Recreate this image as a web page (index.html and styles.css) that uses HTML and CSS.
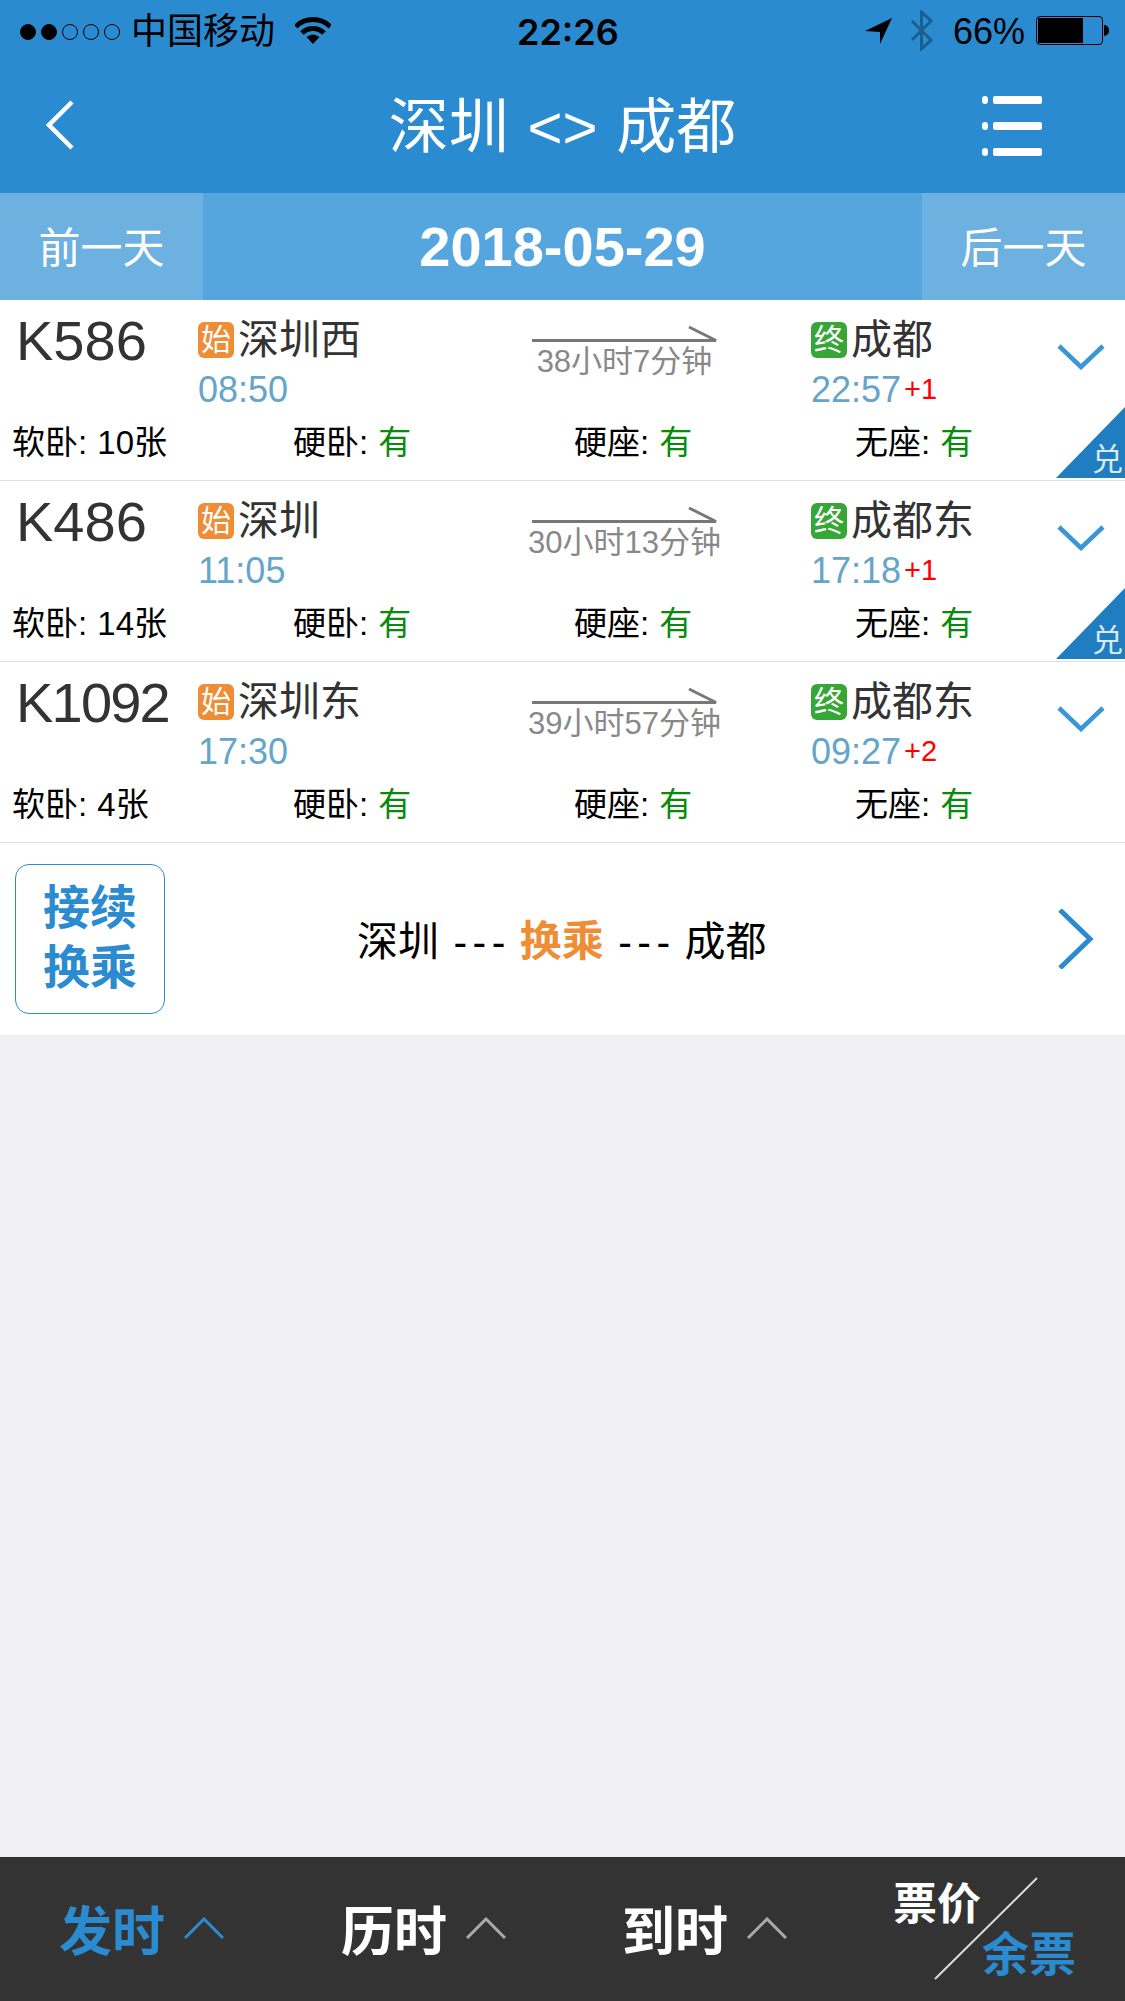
FILE: index.html
```html
<!DOCTYPE html>
<html lang="zh">
<head>
<meta charset="utf-8">
<title>深圳 - 成都</title>
<link rel="stylesheet" href="styles.css">
</head>
<body>
<header class="head">
  <div class="status">
    <div class="signal"><i class="dot on"></i><i class="dot on"></i><i class="dot"></i><i class="dot"></i><i class="dot"></i></div>
    <span class="carrier">中国移动</span>
    <svg class="wifi" viewBox="0 0 36 27"><path d="M.7 9.7a24.5 24.5 0 0 1 34.6 0M7 16a15.5 15.5 0 0 1 22 0" fill="none" stroke="#000" stroke-width="5"/><path d="M18 27 11.5 20Q18 15 24.500 20Z"/></svg>
    <span class="clock">22:26</span>
    <svg class="loc" viewBox="0 0 27 26"><path d="M27 0 0 13 15 14 15 26Z"/></svg>
    <svg class="bt" viewBox="0 0 23 41"><path d="M2 11 21 30 11.500 39V2L21 11 2 30" fill="none" stroke="#1c5e8e" stroke-width="3"/></svg>
    <span class="pct">66%</span>
    <div class="battery"><div class="level"></div></div>
  </div>
  <nav class="nav">
    <div class="nav-left"><svg class="back" viewBox="0 0 28 50"><path d="M26 2 3 25 26 48" fill="none" stroke="#fff" stroke-width="4.500"/></svg></div>
    <h1 class="title">深圳 &lt;&gt; 成都</h1>
    <div class="nav-right">
      <svg class="menu" viewBox="0 0 60 60"><g fill="#fff"><rect x="0" y="0" width="6" height="8" rx="3"/><rect x="11" y="0" width="49" height="8" rx="2"/><rect x="0" y="26" width="6" height="8" rx="3"/><rect x="11" y="26" width="49" height="8" rx="2"/><rect x="0" y="52" width="6" height="8" rx="3"/><rect x="11" y="52" width="49" height="8" rx="2"/></g></svg>
    </div>
  </nav>
  <div class="datebar">
    <div class="day">前一天</div>
    <div class="date">2018-05-29</div>
    <div class="day">后一天</div>
  </div>
</header>

<main class="main">
  <article class="row">
    <div class="top">
      <div class="train">K586</div>
      <div class="stop">
        <div class="name"><span class="tag start">始</span>深圳西</div>
        <div class="time">08:50</div>
      </div>
      <div class="trip">
        <svg class="arrow" viewBox="0 0 185 18"><path d="M0 15.500H184L157 2" fill="none" stroke="#777" stroke-width="3"/></svg>
        <div class="dur">38小时7分钟</div>
      </div>
      <div class="stop">
        <div class="name"><span class="tag end">终</span>成都</div>
        <div class="time">22:57<sup class="plus">+1</sup></div>
      </div>
      <svg class="down" viewBox="0 0 48 26"><path d="M2 2 24 23 46 2" fill="none" stroke="#3a97d6" stroke-width="4.500"/></svg>
    </div>
    <div class="seats">
      <div>软卧: 10张</div>
      <div>硬卧: <em>有</em></div>
      <div>硬座: <em>有</em></div>
      <div>无座: <em>有</em></div>
    </div>
    <div class="corner"><span>兑</span></div>
  </article>

  <article class="row">
    <div class="top">
      <div class="train">K486</div>
      <div class="stop">
        <div class="name"><span class="tag start">始</span>深圳</div>
        <div class="time">11:05</div>
      </div>
      <div class="trip">
        <svg class="arrow" viewBox="0 0 185 18"><path d="M0 15.500H184L157 2" fill="none" stroke="#777" stroke-width="3"/></svg>
        <div class="dur">30小时13分钟</div>
      </div>
      <div class="stop">
        <div class="name"><span class="tag end">终</span>成都东</div>
        <div class="time">17:18<sup class="plus">+1</sup></div>
      </div>
      <svg class="down" viewBox="0 0 48 26"><path d="M2 2 24 23 46 2" fill="none" stroke="#3a97d6" stroke-width="4.500"/></svg>
    </div>
    <div class="seats">
      <div>软卧: 14张</div>
      <div>硬卧: <em>有</em></div>
      <div>硬座: <em>有</em></div>
      <div>无座: <em>有</em></div>
    </div>
    <div class="corner"><span>兑</span></div>
  </article>

  <article class="row">
    <div class="top">
      <div class="train long">K1092</div>
      <div class="stop">
        <div class="name"><span class="tag start">始</span>深圳东</div>
        <div class="time">17:30</div>
      </div>
      <div class="trip">
        <svg class="arrow" viewBox="0 0 185 18"><path d="M0 15.500H184L157 2" fill="none" stroke="#777" stroke-width="3"/></svg>
        <div class="dur">39小时57分钟</div>
      </div>
      <div class="stop">
        <div class="name"><span class="tag end">终</span>成都东</div>
        <div class="time">09:27<sup class="plus">+2</sup></div>
      </div>
      <svg class="down" viewBox="0 0 48 26"><path d="M2 2 24 23 46 2" fill="none" stroke="#3a97d6" stroke-width="4.500"/></svg>
    </div>
    <div class="seats">
      <div>软卧: 4张</div>
      <div>硬卧: <em>有</em></div>
      <div>硬座: <em>有</em></div>
      <div>无座: <em>有</em></div>
    </div>
  </article>

  <section class="transfer">
    <div class="tbox">接续<br>换乘</div>
    <div class="route">深圳 <span class="dash">---</span> <span class="via">换乘</span> <span class="dash">---</span> 成都</div>
    <svg class="next" viewBox="0 0 36 60"><path d="M2 1 32 30 2 59" fill="none" stroke="#2a8bd0" stroke-width="5"/></svg>
  </section>
</main>

<footer class="tabs">
  <div class="tab active">发时<svg class="up" viewBox="0 0 40 22"><path d="M1 21 20 2 39 21" fill="none" stroke="#2a8bd0" stroke-width="3"/></svg></div>
  <div class="tab">历时<svg class="up" viewBox="0 0 40 22"><path d="M1 21 20 2 39 21" fill="none" stroke="#aaa" stroke-width="3"/></svg></div>
  <div class="tab">到时<svg class="up" viewBox="0 0 40 22"><path d="M1 21 20 2 39 21" fill="none" stroke="#aaa" stroke-width="3"/></svg></div>
  <div class="price">
    <span class="p1">票价</span>
    <span class="p2">余票</span>
    <svg class="slash" viewBox="0 0 104 103"><path d="M103 1 1 102" stroke="#ddd" stroke-width="2"/></svg>
  </div>
</footer>
</body>
</html>
```
FILE: styles.css
```css
* { box-sizing: border-box; }
html, body { margin: 0; padding: 0; }
body {
  width: 1125px;
  height: 2001px;
  display: flex;
  flex-direction: column;
  overflow: hidden;
  background: #efeff4;
  font-family: "Liberation Sans", "Noto Sans CJK SC", sans-serif;
  color: #000;
}

.head { background: #2a8bd0; flex: none; }

.status { height: 64px; display: flex; align-items: center; padding-left: 20px; }
.signal { display: flex; gap: 5px; width: 111px; flex: none; }
.dot { width: 16px; height: 16px; border-radius: 50%; border: 1px solid #000; display: block; flex: none; }
.dot.on { background: #000; }
.carrier { font-size: 36px; line-height: 64px; width: 164px; flex: none; }
.wifi { width: 36px; height: 27px; flex: none; margin-top: -3px; }
.clock { font-family: "Inter", "Liberation Sans", sans-serif; font-size: 36px; font-weight: 600; margin-left: 186px; width: 348px; flex: none; }
.loc { width: 27px; height: 26px; flex: none; margin-top: -2px; }
.bt { width: 23px; height: 41px; flex: none; margin-left: 18px; margin-top: -3px; }
.pct { font-size: 36px; margin-left: 20px; width: 83px; flex: none; }
.battery {
  width: 67px; height: 29px; border: 1px solid #000; border-radius: 4px; flex: none; padding: 1px;
  position: relative; margin-top: -3px;
}
.battery::after {
  content: ""; position: absolute; right: -7px; top: 8px; width: 5px; height: 11px;
  background: #000; border-radius: 0 5px 5px 0;
}
.level { width: 45px; height: 100%; background: #000; }

.nav { height: 129px; display: grid; grid-template-columns: 1fr auto 1fr; align-items: center; }
.nav-left { padding-left: 46px; padding-bottom: 7px; display: flex; }
.back { width: 28px; height: 50px; }
.title { margin: 0 0 1px; font-size: 60px; font-weight: 400; color: #fff; line-height: 70px; word-spacing: 2px; }
.nav-right { display: flex; justify-content: flex-end; padding-right: 83px; padding-bottom: 5px; }
.menu { width: 60px; height: 60px; }

.datebar { height: 107px; display: flex; background: #55a5de; color: #fff; }
.day {
  width: 203px; flex: none; background: #6cb1e0; font-size: 42px; padding-bottom: 5px;
  display: flex; align-items: center; justify-content: center;
}
.date { flex: 1; text-align: center; font-size: 56px; font-weight: 700; line-height: 107px; }

.main { flex: 1; }

.row { height: 181px; background: #fff; border-bottom: 1px solid #ddd; position: relative; }
.top {
  display: grid;
  grid-template-columns: 198px 334px 185px 94px 246px 68px;
  height: 123px;
  padding-top: 15px;
}
.train { font-size: 56px; line-height: 64px; color: #333; padding-left: 16px; margin-top: -6px; }
.train.long { letter-spacing: -1.800px; }
.stop { display: flex; flex-direction: column; }
.name { display: flex; align-items: center; font-size: 41px; line-height: 50px; color: #333; }
.tag {
  width: 36px; height: 36px; border-radius: 6px; color: #fff; font-size: 30px; line-height: 36px;
  text-align: center; margin-right: 4px; flex: none;
}
.tag.start { background: #ee8d35; }
.tag.end { background: #36a637; }
.time { font-size: 36px; line-height: 44px; color: #65a5c9; margin-top: 3px; }
.plus { font-size: 29px; color: #f00; margin-left: 3px; vertical-align: 3px; line-height: 1; }
.trip { grid-column: 3; display: flex; flex-direction: column; align-items: center; }
.top .stop:nth-child(2) { grid-column: 2; }
.top .stop:nth-child(4) { grid-column: 5; }
.arrow { width: 185px; height: 18px; flex: none; margin-top: 10px; }
.dur { font-size: 31px; line-height: 36px; color: #888; white-space: nowrap; margin-top: 1px; }
.down { grid-column: 6; width: 48px; height: 26px; margin-top: 29px; }

.seats { display: grid; grid-template-columns: repeat(4, 281px); padding-left: 12px; font-size: 33px; line-height: 40px; word-spacing: 1px; }
.seats em { font-style: normal; color: #0a8a0a; }

.corner {
  position: absolute; right: 0; bottom: 2px; width: 69px; height: 71px;
  background: #1f7dc0; clip-path: polygon(100% 0, 100% 100%, 0 100%);
  display: flex; justify-content: flex-end; align-items: flex-end;
}
.corner span { font-size: 31px; line-height: 36px; color: #dbeaf5; width: 33px; white-space: nowrap; }

.transfer { height: 192px; background: #fff; display: flex; align-items: center; padding-left: 15px; }
.tbox {
  width: 150px; height: 150px; flex: none; border: 1px solid #2a8bd0; border-radius: 14px;
  color: #2a8bd0; font-size: 47px; font-weight: 700; line-height: 60px; text-align: center;
  padding-top: 13px;
}
.route { font-size: 41px; white-space: nowrap; margin-left: 192px; margin-bottom: 4px; width: 702px; flex: none; word-spacing: 3px; }
.dash { letter-spacing: 5.500px; margin-right: -5.500px; }
.via { color: #ee8d35; font-weight: 700; font-size: 42px; }
.next { width: 36px; height: 60px; flex: none; margin-left: -1px; }

.tabs { flex: none; height: 144px; background: #333; display: flex; color: #fff; }
.tab { font-size: 53px; font-weight: 700; display: flex; align-items: center; flex: none; padding-bottom: 2px; }
.tab:nth-child(1) { width: 341px; padding-left: 59px; }
.tab:nth-child(2) { width: 281px; }
.tab:nth-child(3) { width: 271px; }
.tab.active { color: #2a8bd0; }
.up { width: 40px; height: 22px; margin-left: 19px; flex: none; }
.price { position: relative; flex: 1; font-size: 44px; font-weight: 700; line-height: 50px; }
.p1 { display: block; margin-top: 23px; }
.p2 { display: block; margin-left: 89px; margin-top: 0; color: #2a8bd0; font-size: 47px; }
.slash { position: absolute; left: 41px; top: 20px; width: 104px; height: 103px; }
```
